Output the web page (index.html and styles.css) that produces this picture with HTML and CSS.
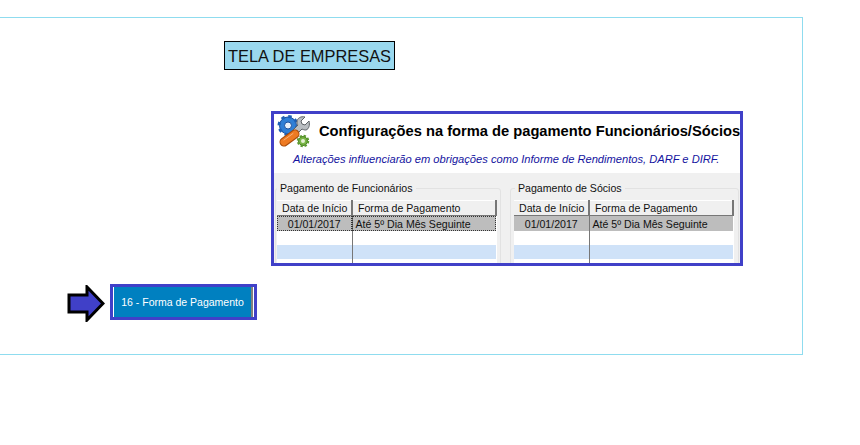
FILE: index.html
```html
<!DOCTYPE html>
<html lang="en">
<head>
    <meta charset="UTF-8">
    <meta name="viewport" content="width=device-width, initial-scale=1.0">
    <title>Tela de Empresas</title>
    <link rel="stylesheet" href="styles.css">
</head>
<body>
    <div class="frame">
        <div class="page-title">TELA DE EMPRESAS</div>

        <div class="panel">
            <div class="panel-head">
                <svg class="panel-icon" width="34" height="35" viewBox="0 0 34 35">
                    <!-- blue gear -->
                    <circle cx="11" cy="11.500" r="8.500" fill="#2f7fd6" stroke="#1b4f9c"/>
                    <circle cx="11" cy="11.500" r="9" fill="none" stroke="#1d5fb4" stroke-width="3" stroke-dasharray="3.400 3.660"/>
                    <circle cx="11" cy="11.500" r="3.500" fill="#e8f1fb" stroke="#1b4f9c"/>
                    <!-- wrench -->
                    <path d="M32 7l-4 4-3-1-1-3 4-4c-4-1-8 1-8 5 0 1 0 2 1 3l-7 7 4 4 7-7c2 1 3 1 4 1 3-1 4-5 3-9z" fill="#b9bdc1" stroke="#5d6266"/>
                    <!-- orange handle -->
                    <path d="M7 28L18 20" stroke="#a84c0c" stroke-width="9" stroke-linecap="round"/>
                    <path d="M7 28L18 20" stroke="#ee7a22" stroke-width="7" stroke-linecap="round"/>
                    <path d="M7 26L16 19.500" stroke="#f9b27a" stroke-width="1" stroke-linecap="round"/>
                    <!-- green gear -->
                    <circle cx="26" cy="27" r="4.500" fill="#7ab648" stroke="#4b7f24"/>
                    <circle cx="26" cy="27" r="5" fill="none" stroke="#5c9a30" stroke-width="2.500" stroke-dasharray="2.200 1.730"/>
                    <circle cx="26" cy="27" r="2" fill="#e4f0d4"/>
                </svg>
                <h1 class="panel-title">Configurações na forma de pagamento Funcionários/Sócios</h1>
            </div>
            <p class="panel-note">Alterações influenciarão em obrigações como Informe de Rendimentos, DARF e DIRF.</p>

            <div class="groups">
                <fieldset class="group">
                    <legend>Pagamento de Funcionários</legend>
                    <table class="pay-table">
                        <tr><th>Data de Início</th><th>Forma de Pagamento</th></tr>
                        <tr class="row-selected row-focus"><td class="center">01/01/2017</td><td>Até 5º Dia Mês Seguinte</td></tr>
                        <tr class="row-white"><td></td><td></td></tr>
                        <tr class="row-blue"><td></td><td></td></tr>
                        <tr class="row-end"><td></td><td></td></tr>
                    </table>
                </fieldset>
                <fieldset class="group">
                    <legend>Pagamento de Sócios</legend>
                    <table class="pay-table">
                        <tr><th>Data de Início</th><th>Forma de Pagamento</th></tr>
                        <tr class="row-selected"><td class="center">01/01/2017</td><td>Até 5º Dia Mês Seguinte</td></tr>
                        <tr class="row-white"><td></td><td></td></tr>
                        <tr class="row-blue"><td></td><td></td></tr>
                        <tr class="row-end"><td></td><td></td></tr>
                    </table>
                </fieldset>
            </div>
        </div>

        <div class="action-row">
            <svg class="arrow" width="38" height="37" viewBox="0 0 38 37">
                <path d="M2 10H20V2L36 18.500 20 35V27H2z" fill="#4040c8" stroke="#000" stroke-width="3"/>
            </svg>
            <div class="action-box">
                <button class="action-btn">16 - Forma de Pa<u>g</u>amento</button>
            </div>
        </div>
    </div>
</body>
</html>
```

FILE: styles.css
```css
body {
    margin: 0;
    background: white;
    font-family: "Liberation Sans", Arial, sans-serif;
    color: #111;
}
.frame {
    box-sizing: border-box;
    width: 804px;
    height: 338px;
    margin: 17px 0 0 -1px;
    border: 1px solid #8fdcef;
    padding-top: 23px;
}
.page-title {
    box-sizing: border-box;
    width: 171px;
    height: 29px;
    margin-left: 224px;
    border: 1px solid #000;
    background: #9ad8ee;
    font-size: 16.400px;
    line-height: 28px;
    text-align: center;
    white-space: nowrap;
}
.panel {
    box-sizing: border-box;
    width: 472px;
    height: 155px;
    margin: 41px 0 0 271px;
    border: 3px solid #4040c8;
    background: white;
    display: flex;
    flex-direction: column;
}
.panel-head {
    display: flex;
    align-items: center;
    height: 32px;
    padding-left: 3px;
}
.panel-icon {
    flex: none;
    margin-top: 3px;
}
.panel-title {
    margin: 2px 0 0 8px;
    font-size: 14.700px;
    font-weight: bold;
    color: #000;
    white-space: nowrap;
}
.panel-note {
    margin: 0;
    height: 27px;
    padding-left: 19px;
    font-size: 11.130px;
    font-style: italic;
    line-height: 26px;
    color: #1414a0;
    white-space: nowrap;
}
.groups {
    flex: 1;
    min-height: 0;
    display: flex;
    gap: 9px;
    padding: 10px 0 0 1px;
    background: #f0f0f0;
    overflow: hidden;
}
.group {
    box-sizing: border-box;
    margin: 0;
    min-width: 0;
    height: 90px;
    padding: 6px 5px 0 1px;
    border: 1px solid #e2e2e2;
    border-radius: 3px 3px 0 0;
    font-size: 10.600px;
    flex: none;
}
.group:first-child {
    width: 226px;
}
.group:last-child {
    width: 229px;
    padding-left: 3px;
}
.group legend {
    padding: 0 3px;
    margin-left: 0;
    font-size: 10.600px;
    line-height: 11px;
}
.group:last-child legend {
    margin-left: 1px;
}
.pay-table {
    width: 220px;
    border-collapse: collapse;
    table-layout: fixed;
    background: white;
    font-size: 10.600px;
}
.pay-table th {
    box-sizing: border-box;
    height: 15px;
    padding: 0 0 1px 5px;
    background: #f0f0f0;
    border-top: 1px solid #fff;
    border-right: 2px solid #777;
    border-bottom: 1px solid #777;
    font-weight: normal;
    line-height: 12px;
    text-align: left;
    white-space: nowrap;
}
.pay-table th:first-child {
    width: 75px;
}
.pay-table td {
    padding: 1px 0 0 3px;
    white-space: nowrap;
}
.pay-table td:first-child {
    border-right: 1px solid #777;
}
.pay-table .center {
    text-align: center;
    padding: 1px 0 0;
}
.row-selected td {
    height: 14px;
    background: #bdbdbd;
}
.row-focus td {
    outline: 1px dotted #333;
    outline-offset: -1px;
}
.row-white td {
    height: 13px;
}
.row-blue td {
    height: 13px;
    background: #cfe2f8;
}
.row-end td {
    height: 6px;
}
.action-row {
    display: flex;
    align-items: flex-start;
    gap: 5px;
    margin: 18px 0 0 67px;
}
.arrow {
    flex: none;
    margin-top: 1px;
}
.action-box {
    box-sizing: border-box;
    width: 147px;
    height: 36px;
    border: 3px solid #4040c8;
    padding-left: 1px;
    padding-right: 1px;
    background: white;
}
.action-btn {
    box-sizing: border-box;
    display: block;
    width: 100%;
    height: 30px;
    padding: 0;
    border: none;
    border-right: 2px solid #808080;
    background: #0080c0;
    color: white;
    font-family: "Liberation Sans", Arial, sans-serif;
    font-size: 10.500px;
    white-space: nowrap;
}
```
